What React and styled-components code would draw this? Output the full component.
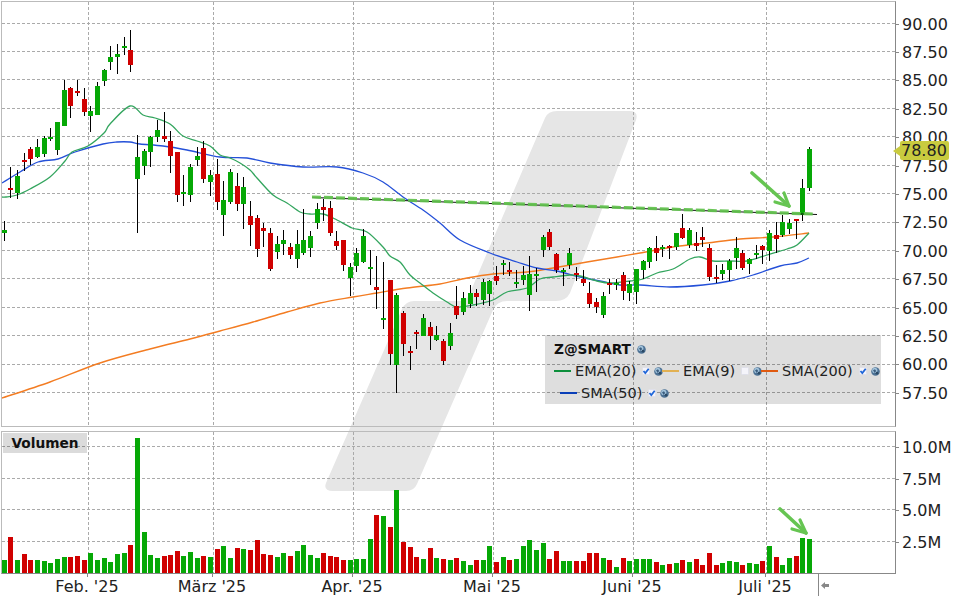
import React from 'react';
import styled, { createGlobalStyle } from 'styled-components';

// candles: [high, bodyTop, bodyBottom, low, colour], pixel rows of the picture
const candles = [
  [221, 230, 233, 241, 'g'], [167, 188, 190, 198, 'r'], [170, 176, 193, 199, 'g'], [153, 160, 162, 171, 'r'],
  [147, 149, 159, 165, 'r'], [139, 147, 157, 158, 'g'], [136, 138, 154, 157, 'g'], [128, 137, 139, 141, 'g'],
  [122, 122, 150, 155, 'g'], [80, 90, 126, 126, 'g'], [87, 88, 106, 118, 'r'], [80, 91, 93, 96, 'r'],
  [88, 99, 112, 116, 'r'], [106, 111, 116, 132, 'g'], [82, 86, 115, 115, 'g'], [69, 70, 81, 86, 'g'],
  [46, 57, 62, 70, 'g'], [44, 54, 57, 74, 'g'], [37, 46, 48, 55, 'g'], [30, 50, 65, 72, 'r'],
  [135, 157, 179, 233, 'g'], [149, 151, 166, 175, 'g'], [136, 137, 152, 167, 'g'], [120, 130, 137, 142, 'g'],
  [112, 136, 139, 142, 'r'], [131, 141, 156, 173, 'r'], [152, 152, 195, 202, 'r'], [175, 192, 194, 206, 'g'],
  [164, 167, 195, 202, 'g'], [147, 156, 160, 166, 'g'], [141, 148, 179, 183, 'r'], [170, 175, 182, 196, 'g'],
  [159, 174, 202, 210, 'r'], [181, 200, 215, 236, 'g'], [169, 172, 202, 204, 'g'], [173, 186, 204, 211, 'r'],
  [177, 187, 204, 229, 'g'], [201, 216, 225, 246, 'r'], [215, 218, 249, 257, 'r'], [223, 228, 231, 247, 'r'],
  [228, 233, 269, 271, 'r'], [236, 244, 252, 259, 'g'], [230, 240, 244, 255, 'g'], [243, 247, 255, 259, 'r'],
  [230, 244, 259, 268, 'g'], [209, 240, 253, 255, 'g'], [231, 236, 248, 257, 'g'], [203, 209, 223, 229, 'g'],
  [199, 207, 210, 221, 'r'], [201, 208, 233, 236, 'r'], [231, 241, 246, 250, 'r'], [240, 240, 265, 271, 'r'],
  [263, 267, 278, 296, 'g'], [248, 253, 266, 272, 'g'], [229, 236, 262, 263, 'g'], [250, 267, 269, 285, 'g'],
  [256, 287, 290, 309, 'r'], [262, 318, 320, 329, 'g'], [280, 280, 354, 365, 'r'], [293, 295, 365, 393, 'g'],
  [311, 313, 344, 356, 'r'], [346, 351, 353, 370, 'r'], [330, 332, 334, 349, 'r'], [314, 318, 336, 336, 'g'],
  [322, 327, 336, 350, 'r'], [326, 335, 340, 341, 'g'], [339, 341, 361, 365, 'r'], [323, 333, 346, 350, 'g'],
  [286, 306, 315, 319, 'r'], [292, 298, 312, 315, 'g'], [285, 293, 304, 308, 'g'], [289, 293, 297, 306, 'r'],
  [279, 282, 300, 305, 'g'], [280, 281, 294, 306, 'g'], [266, 276, 281, 285, 'r'], [260, 263, 265, 275, 'g'],
  [262, 270, 272, 276, 'r'], [270, 282, 284, 288, 'g'], [266, 275, 280, 285, 'g'], [256, 274, 295, 311, 'g'],
  [268, 274, 276, 292, 'g'], [235, 237, 250, 257, 'g'], [229, 232, 247, 250, 'r'], [253, 254, 270, 273, 'r'],
  [268, 270, 272, 286, 'g'], [248, 253, 265, 269, 'g'], [267, 273, 275, 281, 'r'], [270, 279, 283, 286, 'r'],
  [282, 293, 304, 308, 'r'], [298, 302, 307, 313, 'r'], [292, 296, 315, 318, 'g'], [279, 283, 285, 294, 'r'],
  [279, 283, 285, 290, 'g'], [272, 275, 291, 300, 'r'], [281, 284, 293, 301, 'g'], [269, 269, 292, 304, 'g'],
  [260, 261, 270, 279, 'g'], [247, 248, 262, 268, 'g'], [236, 248, 253, 261, 'r'], [245, 247, 249, 257, 'g'],
  [245, 246, 248, 259, 'r'], [233, 233, 247, 250, 'g'], [214, 228, 238, 239, 'r'], [228, 230, 245, 248, 'g'],
  [232, 243, 246, 251, 'r'], [227, 237, 240, 247, 'r'], [244, 248, 277, 281, 'r'], [265, 277, 279, 283, 'r'],
  [264, 270, 274, 280, 'g'], [259, 261, 270, 281, 'g'], [237, 248, 258, 269, 'g'], [250, 253, 268, 270, 'r'],
  [258, 259, 264, 274, 'g'], [245, 253, 255, 259, 'g'], [245, 246, 250, 264, 'r'], [230, 233, 251, 261, 'g'],
  [222, 235, 239, 253, 'r'], [215, 222, 235, 237, 'g'], [219, 223, 229, 234, 'g'], [219, 219, 221, 239, 'r'],
  [179, 188, 215, 221, 'g'], [147, 149, 188, 191, 'g'],
];

const volumes = [
  [13, 'g'], [36, 'r'], [13, 'g'], [19, 'r'], [13, 'r'], [13, 'g'], [12, 'g'], [10, 'g'], [14, 'g'], [16, 'g'],
  [16, 'r'], [17, 'r'], [13, 'r'], [20, 'g'], [13, 'g'], [15, 'g'], [11, 'g'], [19, 'g'], [20, 'g'], [28, 'r'],
  [135, 'g'], [41, 'g'], [18, 'g'], [15, 'g'], [17, 'r'], [18, 'r'], [22, 'r'], [17, 'g'], [21, 'g'], [15, 'g'],
  [17, 'r'], [16, 'g'], [24, 'r'], [27, 'g'], [15, 'g'], [25, 'r'], [24, 'g'], [23, 'r'], [33, 'r'], [19, 'r'],
  [18, 'r'], [16, 'g'], [20, 'g'], [17, 'r'], [22, 'g'], [28, 'g'], [18, 'g'], [15, 'g'], [20, 'r'], [17, 'r'],
  [16, 'r'], [13, 'r'], [13, 'g'], [14, 'g'], [14, 'g'], [34, 'g'], [58, 'r'], [57, 'g'], [46, 'r'], [83, 'g'],
  [31, 'r'], [26, 'r'], [16, 'r'], [14, 'g'], [25, 'r'], [15, 'g'], [14, 'r'], [13, 'g'], [15, 'r'], [12, 'g'],
  [8, 'g'], [13, 'r'], [13, 'g'], [27, 'g'], [11, 'r'], [16, 'g'], [13, 'r'], [14, 'g'], [27, 'g'], [33, 'g'],
  [23, 'g'], [30, 'g'], [14, 'r'], [22, 'r'], [12, 'g'], [12, 'g'], [12, 'r'], [12, 'r'], [20, 'r'], [20, 'r'],
  [15, 'g'], [13, 'r'], [6, 'g'], [15, 'r'], [12, 'g'], [14, 'g'], [14, 'g'], [14, 'g'], [11, 'r'], [8, 'g'],
  [9, 'r'], [10, 'g'], [13, 'r'], [11, 'g'], [14, 'r'], [8, 'r'], [20, 'r'], [8, 'r'], [10, 'g'], [12, 'g'],
  [11, 'g'], [8, 'r'], [10, 'g'], [9, 'g'], [12, 'r'], [27, 'g'], [16, 'r'], [8, 'g'], [15, 'g'], [17, 'r'],
  [35, 'g'], [34, 'g'],
];

const ema20 = [
  [2, 197], [6, 197], [17, 195], [30, 189], [50, 177], [65, 161], [72, 152], [88, 146], [104, 133], [110, 124],
  [130, 106], [143, 115], [155, 118], [170, 124], [183, 136], [197, 141], [210, 146], [220, 155], [230, 158],
  [240, 163], [250, 170], [257, 178], [273, 195], [287, 203], [300, 212], [310, 214], [323, 214], [337, 220],
  [352, 228], [367, 232], [383, 247], [390, 256], [400, 262], [410, 275], [420, 283], [433, 293], [447, 302],
  [457, 307], [473, 305], [493, 300], [507, 292], [527, 288], [540, 279], [553, 277], [570, 275], [580, 276],
  [597, 281], [610, 283], [630, 281], [643, 279], [657, 273], [673, 269], [690, 259], [700, 257], [713, 261],
  [730, 261], [747, 261], [767, 255], [787, 249], [797, 245], [809, 233],
];

const sma50 = [
  [2, 183], [20, 172], [38, 162], [58, 159], [75, 152], [103, 144], [117, 142], [130, 142], [140, 144], [163, 146],
  [187, 150], [220, 157], [247, 158], [270, 163], [303, 167], [337, 167], [363, 173], [383, 182], [403, 197],
  [423, 210], [440, 223], [460, 240], [490, 253], [517, 262], [537, 268], [557, 271], [580, 277], [600, 281],
  [620, 285], [640, 285], [670, 287], [703, 285], [730, 281], [753, 275], [780, 266], [797, 263], [809, 258],
];

const sma200 = [
  [2, 398], [50, 382], [100, 363], [150, 349], [190, 339], [220, 331], [253, 322], [287, 312], [320, 303], [353, 297],
  [377, 293], [407, 288], [440, 284], [467, 278], [493, 274], [527, 272], [553, 268], [587, 262], [617, 257],
  [640, 253], [673, 247], [707, 243], [740, 239], [773, 237], [809, 233],
];

const monthLines = [88, 213, 353, 493, 633, 766];
const priceLines = [23, 51, 79, 108, 136, 165, 193, 222, 250, 278, 307, 335, 364, 392];
const volumeLines = [446, 478, 509, 541];
const prices = ['90.00', '87.50', '85.00', '82.50', '80.00', '77.50', '75.00', '72.50', '70.00', '67.50', '65.00', '62.50', '60.00', '57.50'];
const volumeLabels = ['10.0M', '7.5M', '5.0M', '2.5M'];
const months = [
  { label: "Feb. '25", gap: 46 },
  { label: "März '25", gap: 45 },
  { label: "Apr. '25", gap: 60 },
  { label: "Mai '25", gap: 60 },
  { label: "Juni '25", gap: 60 },
  { label: "Juli '25", gap: 53 },
];

const GREEN = '#06a806';
const RED = '#d00000';
const candleX = i => Math.floor(4.33 + 6.653 * i);
const toPoints = line => line.map(p => p.join(',')).join(' ');

// catmull-rom through the read-off points so the averages don't look polygonal
const smooth = line => {
  let d = `M${line[0][0]} ${line[0][1]}`;
  for (let i = 0; i < line.length - 1; i++) {
    const a = line[i - 1] || line[i];
    const b = line[i];
    const c = line[i + 1];
    const e = line[i + 2] || c;
    const c1 = [b[0] + (c[0] - a[0]) / 6, b[1] + (c[1] - a[1]) / 6];
    const c2 = [c[0] - (e[0] - b[0]) / 6, c[1] - (e[1] - b[1]) / 6];
    d += ` C${c1[0]} ${c1[1]} ${c2[0]} ${c2[1]} ${c[0]} ${c[1]}`;
  }
  return d;
};

const GlobalStyle = createGlobalStyle`
  html, body {
    margin: 0;
    padding: 0;
    background: #fff;
  }
`;

const Page = styled.div`
  position: relative;
  width: 960px;
  height: 600px;
  overflow: hidden;
  padding: 1px 0 0 1px;
  box-sizing: border-box;
  font-family: 'DejaVu Sans', Verdana, sans-serif;
  color: #222;
`;

const Watermark = styled.svg`
  position: absolute;
  left: 0;
  top: 0;
`;

const ChartRow = styled.div`
  position: relative;
  display: flex;
  margin-bottom: ${p => p.$gap || 0}px;
`;

const Plot = styled.div`
  position: relative;
  width: 893px;
  height: ${p => p.$height}px;
  border: 1px solid #bbb;
  border-right-color: #888;
  border-bottom-color: ${p => p.$axis ? '#888' : '#bbb'};

  svg {
    display: block;
  }
`;

const Axis = styled.div`
  position: relative;
  padding-top: ${p => p.$top}px;
`;

const AxisLabel = styled.div`
  display: flex;
  align-items: center;
  height: ${p => p.$pitch}px;
  font-size: 16px;

  &::before {
    content: '';
    width: 3px;
    height: 1px;
    margin-right: 3px;
    background: #888;
  }
`;

const PriceTag = styled.div`
  position: absolute;
  left: 4px;
  top: 140px;
  width: 49px;
  height: 19px;
  padding-left: 1px;
  box-sizing: border-box;
  border-radius: 2px;
  background: #c9cb3f;
  font-size: 16px;
  line-height: 19px;

  &::before {
    content: '';
    position: absolute;
    left: -7px;
    top: 5px;
    border: 5px solid transparent;
    border-left: 0;
    border-right: 7px solid #c9cb3f;
  }
`;

const Legend = styled.div`
  position: absolute;
  left: 543px;
  top: 333px;
  width: 336px;
  height: 69px;
  padding: 4px 0 0 9px;
  box-sizing: border-box;
  background: rgba(0, 0, 0, 0.13);
`;

const LegendTitle = styled.div`
  display: flex;
  align-items: center;
  gap: 6px;
  height: 20px;
  margin-bottom: 1px;
  font-size: 13.7px;
  font-weight: bold;
  color: #111;
`;

const LegendRow = styled.div`
  display: flex;
  align-items: center;
  height: 22px;
  margin-left: ${p => p.$indent || 0}px;
`;

const LegendItem = styled.div`
  display: flex;
  align-items: center;
  flex: none;
  width: ${p => p.$width}px;

  svg {
    flex: none;
  }
`;

const Swatch = styled.span`
  flex: none;
  width: 17px;
  height: 2px;
  margin-right: 4px;
  background: ${p => p.$color};
`;

const SeriesName = styled.span`
  font-size: 14.5px;
  margin-right: 5px;
`;

const CheckMark = styled.svg`
  margin-left: 1px;
  margin-right: 4px;
`;

const VolumeTag = styled.div`
  position: absolute;
  left: 1px;
  top: 1px;
  width: 84px;
  height: 20px;
  background: rgba(0, 0, 0, 0.14);
  font-size: 13.7px;
  font-weight: bold;
  line-height: 20px;
  text-align: center;
  color: #111;
`;

const TimeAxis = styled.div`
  display: flex;
`;

const Month = styled.div`
  width: 80px;
  flex: none;
  margin-left: ${p => p.$gap}px;
  font-size: 16px;
  line-height: 20px;
  text-align: center;
  white-space: nowrap;

  &::before {
    content: '';
    display: block;
    width: 1px;
    height: 3px;
    margin: 0 auto;
    background: #888;
  }
`;

const EndMarker = styled.div`
  display: flex;
  align-items: center;
  height: 22px;
  margin-left: 13px;
  padding-left: 2px;
  border-left: 1px solid #888;
`;

const Globe = () => (
  <svg width="9" height="9" viewBox="0 0 9 9">
    <circle cx="4.5" cy="4.5" r="4.3" fill="#4d7295" />
    <circle cx="3.8" cy="3.4" r="2.6" fill="#a3c4dc" />
    <path d="M2 3.2 L4 2.2 L5.2 4 L3.6 6 Z" fill="#3d5f80" />
    <circle cx="6" cy="6.2" r="1.4" fill="#2c4a66" />
  </svg>
);

const Check = ({ on }) => (
  <CheckMark width="8" height="8" viewBox="0 0 8 8">
    <rect x="0.5" y="0.5" width="7" height="7" rx="1" fill="#f4f4fa" stroke="#dfe0ea" />
    {on && <path d="M1.5 4 L3.3 6 L6.7 1.8" fill="none" stroke="#1f66d8" strokeWidth="1.8" />}
  </CheckMark>
);

const Grid = ({ rows, top, bottom }) => (
  <g stroke="#aaa" strokeDasharray="3 2" shapeRendering="crispEdges">
    {rows.map(y => <line key={y} x1="2" x2="895" y1={y + 0.5} y2={y + 0.5} />)}
    {monthLines.map(x => <line key={x} x1={x + 0.5} x2={x + 0.5} y1={top} y2={bottom} />)}
  </g>
);

const Arrow = ({ from, to, barbs }) => (
  <g fill="none" stroke="#66c552" strokeLinecap="round" strokeLinejoin="round">
    <line x1={from[0]} y1={from[1]} x2={to[0]} y2={to[1]} strokeWidth="3.6" />
    <polyline points={toPoints([barbs[0], to, barbs[1]])} strokeWidth="3.2" />
  </g>
);

const PriceChart = () => (
  <svg width="893" height="424" viewBox="2 2 893 424">
    <Grid rows={priceLines} top={2} bottom={426} />
    <g fill="none" strokeWidth="1.3" strokeLinejoin="round">
      <path d={smooth(sma200)} stroke="#f37c22" strokeWidth="1.4" />
      <path d={smooth(sma50)} stroke="#2450d8" />
      <path d={smooth(ema20)} stroke="#33a55e" />
    </g>
    <g shapeRendering="crispEdges">
      {candles.map(([high, top, bottom, low, colour], i) => (
        <g key={i}>
          <rect x={candleX(i)} y={high} width="1" height={low - high} fill="#000" />
          <rect x={candleX(i) - 2} y={top} width="5" height={bottom - top} fill={colour === 'g' ? GREEN : RED} />
        </g>
      ))}
    </g>
    <line x1="312" y1="197.5" x2="817" y2="214.5" stroke="#111" />
    <line x1="312" y1="197" x2="813" y2="214" stroke="#60c24c" strokeWidth="3.2" strokeDasharray="9 3" opacity="0.92" />
    <Arrow from={[752, 173]} to={[789, 206]} barbs={[[775, 202], [784, 193]]} />
  </svg>
);

const VolumeChart = () => (
  <svg width="893" height="141" viewBox="2 432 893 141">
    <Grid rows={volumeLines} top={432} bottom={573} />
    <g shapeRendering="crispEdges">
      {volumes.map(([height, colour], i) => (
        <rect key={i} x={candleX(i) - 2} y={573 - height} width="5" height={height} fill={colour === 'g' ? GREEN : RED} />
      ))}
    </g>
    <Arrow from={[780, 509]} to={[806, 533]} barbs={[[792, 529], [800, 520]]} />
  </svg>
);

export default function App() {
  return (
    <Page>
      <GlobalStyle />
      <Watermark width="960" height="600">
        <path
          d="M545 118 Q548 111 557 111 L629 111 Q639 111 636 120 L570 293 Q566 301 556 301 L507 301 Q497 301 493 310 L417 484 Q414 491 406 491 L333 491 Q323 491 326 483 L402 309 Q406 301 414 301 L460 301 Q466 301 469 295 Z"
          fill="#e6e6e6"
        />
      </Watermark>

      <ChartRow $gap={4}>
        <Plot $height={424}>
          <PriceChart />
          <Legend>
            <LegendTitle>Z@SMART <Globe /></LegendTitle>
            <LegendRow>
              <LegendItem $width={108}>
                <Swatch $color="#0d8f3c" />
                <SeriesName>EMA(20)</SeriesName>
                <Check on />
                <Globe />
              </LegendItem>
              <LegendItem $width={99}>
                <Swatch $color="#e2b153" />
                <SeriesName>EMA(9)</SeriesName>
                <Check />
                <Globe />
              </LegendItem>
              <LegendItem $width={120}>
                <Swatch $color="#e05a10" />
                <SeriesName>SMA(200)</SeriesName>
                <Check on />
                <Globe />
              </LegendItem>
            </LegendRow>
            <LegendRow $indent={6}>
              <LegendItem $width={110}>
                <Swatch $color="#0a3fb8" />
                <SeriesName>SMA(50)</SeriesName>
                <Check on />
                <Globe />
              </LegendItem>
            </LegendRow>
          </Legend>
        </Plot>
        <Axis $top={9}>
          {prices.map(price => <AxisLabel key={price} $pitch={28.4}>{price}</AxisLabel>)}
          <PriceTag>78.80</PriceTag>
        </Axis>
      </ChartRow>

      <ChartRow>
        <Plot $height={141} $axis>
          <VolumeChart />
          <VolumeTag>Volumen</VolumeTag>
        </Plot>
        <Axis $top={1}>
          {volumeLabels.map(label => <AxisLabel key={label} $pitch={31.5}>{label}</AxisLabel>)}
        </Axis>
      </ChartRow>

      <TimeAxis>
        {months.map(month => <Month key={month.label} $gap={month.gap}>{month.label}</Month>)}
        <EndMarker>
          <svg width="9" height="9" viewBox="0 0 9 9">
            <path d="M0 4.5 L4 1 L4 3 L8 3 L8 6 L4 6 L4 8 Z" fill="#888" />
          </svg>
        </EndMarker>
      </TimeAxis>
    </Page>
  );
}
